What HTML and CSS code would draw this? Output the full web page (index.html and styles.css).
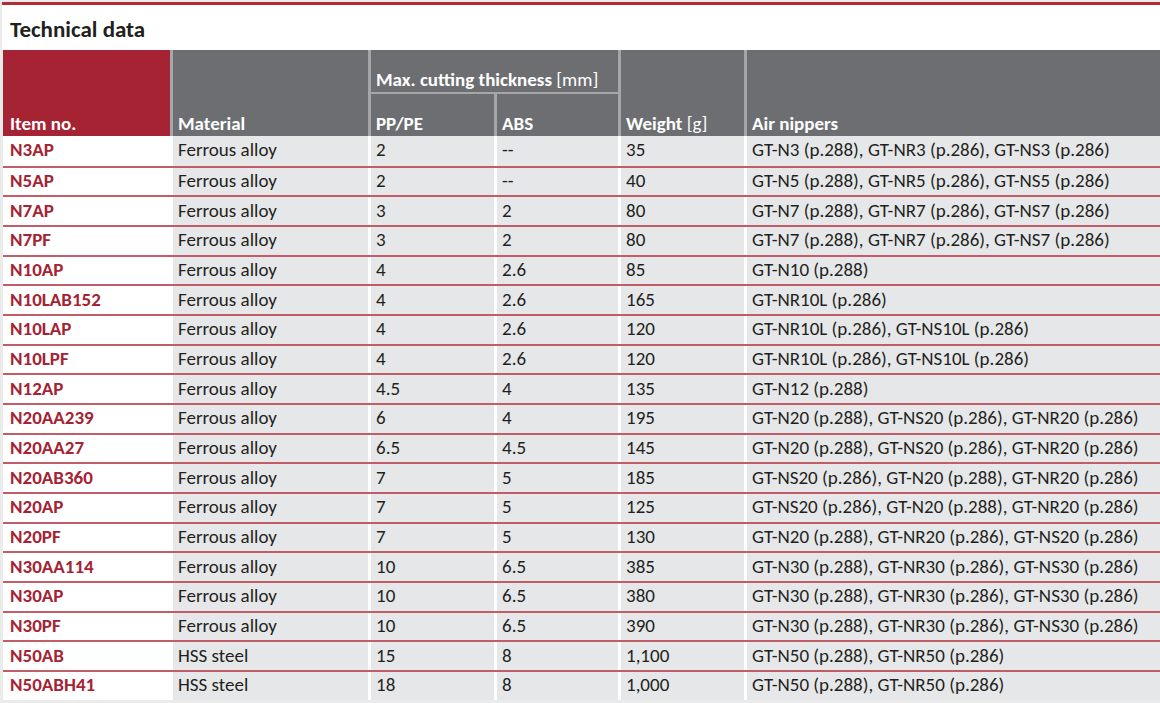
FILE: index.html
```html
<!DOCTYPE html>
<html lang="en">
<head>
<meta charset="utf-8">
<title>Technical data</title>
<link rel="stylesheet" href="styles.css">
</head>
<body>
<div class="page">
  <div class="titlebar"><h1 class="title">Technical data</h1></div>
  <div class="table">
    <div class="thead">
      <div class="th th-item">Item no.</div>
      <div class="th th-mat">Material</div>
      <div class="th th-max">Max. cutting thickness <span class="unit">[mm]</span></div>
      <div class="th th-pp">PP/PE</div>
      <div class="th th-abs">ABS</div>
      <div class="th th-w">Weight <span class="unit">[g]</span></div>
      <div class="th th-air">Air nippers</div>
    </div>
    <div class="row"><div class="c item">N3AP</div><div class="c">Ferrous alloy</div><div class="c">2</div><div class="c">--</div><div class="c">35</div><div class="c">GT-N3 (p.288), GT-NR3 (p.286), GT-NS3 (p.286)</div></div>
    <div class="row"><div class="c item">N5AP</div><div class="c">Ferrous alloy</div><div class="c">2</div><div class="c">--</div><div class="c">40</div><div class="c">GT-N5 (p.288), GT-NR5 (p.286), GT-NS5 (p.286)</div></div>
    <div class="row"><div class="c item">N7AP</div><div class="c">Ferrous alloy</div><div class="c">3</div><div class="c">2</div><div class="c">80</div><div class="c">GT-N7 (p.288), GT-NR7 (p.286), GT-NS7 (p.286)</div></div>
    <div class="row"><div class="c item">N7PF</div><div class="c">Ferrous alloy</div><div class="c">3</div><div class="c">2</div><div class="c">80</div><div class="c">GT-N7 (p.288), GT-NR7 (p.286), GT-NS7 (p.286)</div></div>
    <div class="row"><div class="c item">N10AP</div><div class="c">Ferrous alloy</div><div class="c">4</div><div class="c">2.6</div><div class="c">85</div><div class="c">GT-N10 (p.288)</div></div>
    <div class="row"><div class="c item">N10LAB152</div><div class="c">Ferrous alloy</div><div class="c">4</div><div class="c">2.6</div><div class="c">165</div><div class="c">GT-NR10L (p.286)</div></div>
    <div class="row"><div class="c item">N10LAP</div><div class="c">Ferrous alloy</div><div class="c">4</div><div class="c">2.6</div><div class="c">120</div><div class="c">GT-NR10L (p.286), GT-NS10L (p.286)</div></div>
    <div class="row"><div class="c item">N10LPF</div><div class="c">Ferrous alloy</div><div class="c">4</div><div class="c">2.6</div><div class="c">120</div><div class="c">GT-NR10L (p.286), GT-NS10L (p.286)</div></div>
    <div class="row"><div class="c item">N12AP</div><div class="c">Ferrous alloy</div><div class="c">4.5</div><div class="c">4</div><div class="c">135</div><div class="c">GT-N12 (p.288)</div></div>
    <div class="row"><div class="c item">N20AA239</div><div class="c">Ferrous alloy</div><div class="c">6</div><div class="c">4</div><div class="c">195</div><div class="c">GT-N20 (p.288), GT-NS20 (p.286), GT-NR20 (p.286)</div></div>
    <div class="row"><div class="c item">N20AA27</div><div class="c">Ferrous alloy</div><div class="c">6.5</div><div class="c">4.5</div><div class="c">145</div><div class="c">GT-N20 (p.288), GT-NS20 (p.286), GT-NR20 (p.286)</div></div>
    <div class="row"><div class="c item">N20AB360</div><div class="c">Ferrous alloy</div><div class="c">7</div><div class="c">5</div><div class="c">185</div><div class="c">GT-NS20 (p.286), GT-N20 (p.288), GT-NR20 (p.286)</div></div>
    <div class="row"><div class="c item">N20AP</div><div class="c">Ferrous alloy</div><div class="c">7</div><div class="c">5</div><div class="c">125</div><div class="c">GT-NS20 (p.286), GT-N20 (p.288), GT-NR20 (p.286)</div></div>
    <div class="row"><div class="c item">N20PF</div><div class="c">Ferrous alloy</div><div class="c">7</div><div class="c">5</div><div class="c">130</div><div class="c">GT-N20 (p.288), GT-NR20 (p.286), GT-NS20 (p.286)</div></div>
    <div class="row"><div class="c item">N30AA114</div><div class="c">Ferrous alloy</div><div class="c">10</div><div class="c">6.5</div><div class="c">385</div><div class="c">GT-N30 (p.288), GT-NR30 (p.286), GT-NS30 (p.286)</div></div>
    <div class="row"><div class="c item">N30AP</div><div class="c">Ferrous alloy</div><div class="c">10</div><div class="c">6.5</div><div class="c">380</div><div class="c">GT-N30 (p.288), GT-NR30 (p.286), GT-NS30 (p.286)</div></div>
    <div class="row"><div class="c item">N30PF</div><div class="c">Ferrous alloy</div><div class="c">10</div><div class="c">6.5</div><div class="c">390</div><div class="c">GT-N30 (p.288), GT-NR30 (p.286), GT-NS30 (p.286)</div></div>
    <div class="row"><div class="c item">N50AB</div><div class="c">HSS steel</div><div class="c">15</div><div class="c">8</div><div class="c">1,100</div><div class="c">GT-N50 (p.288), GT-NR50 (p.286)</div></div>
    <div class="row"><div class="c item">N50ABH41</div><div class="c">HSS steel</div><div class="c">18</div><div class="c">8</div><div class="c">1,000</div><div class="c">GT-N50 (p.288), GT-NR50 (p.286)</div></div>
  </div>
</div>
</body>
</html>
```

FILE: styles.css
```css
html, body {
  margin: 0;
  padding: 0;
}
body {
  background: #ebebeb;
  font-family: Carlito, Lato, "Open Sans", sans-serif;
  color: #231f20;
  width: 1160px;
  height: 703px;
  overflow: hidden;
}
.page {
  padding: 2px 0 0 2px;
}
.titlebar {
  border-top: 3px solid #b52a37;
  background: #fff;
  height: 48px;
  padding-left: 1px;
  box-sizing: border-box;
}
.title {
  margin: 0;
  padding: 12px 0 0 7px;
  font-size: 23px;
  font-weight: 700;
  line-height: 24px;
  color: #231f20;
}
.table {
  margin-left: 1px;
}
.thead {
  display: grid;
  grid-template-columns: 167px 195px 123px 121px 123px 1fr;
  grid-template-rows: 42px 42px;
  column-gap: 3px;
  row-gap: 2px;
  background: #a4a6a9;
  height: 86px;
}
.th {
  background: #6d6e71;
  color: #fff;
  font-weight: 700;
  font-size: 19px;
  display: flex;
  align-items: flex-end;
  padding: 0 5px 2px;
  line-height: 20px;
  white-space: nowrap;
}
.th-item { grid-column: 1; grid-row: 1 / 3; background: #a52332; padding-left: 7px; }
.th-mat { grid-column: 2; grid-row: 1 / 3; }
.th-max { grid-column: 3 / 5; grid-row: 1; white-space: pre; }
.th-pp { grid-column: 3; grid-row: 2; }
.th-abs { grid-column: 4; grid-row: 2; }
.th-w { grid-column: 5; grid-row: 1 / 3; white-space: pre; }
.th-air { grid-column: 6; grid-row: 1 / 3; }
.unit { font-weight: 400; }
.row {
  display: grid;
  grid-template-columns: 167px 195px 123px 121px 123px 1fr;
  column-gap: 3px;
  background: #fff;
  height: 29.68px;
  box-sizing: border-box;
  border-top: 2px solid #c25c66;
}
.thead + .row {
  border-top: 0;
}
.c {
  background: #e6e7e8;
  font-size: 19px;
  display: flex;
  align-items: center;
  padding: 0 5px 2px;
  white-space: nowrap;
}
.c.item {
  background: #fff;
  color: #a52332;
  font-weight: 700;
  padding-left: 7px;
}
```
